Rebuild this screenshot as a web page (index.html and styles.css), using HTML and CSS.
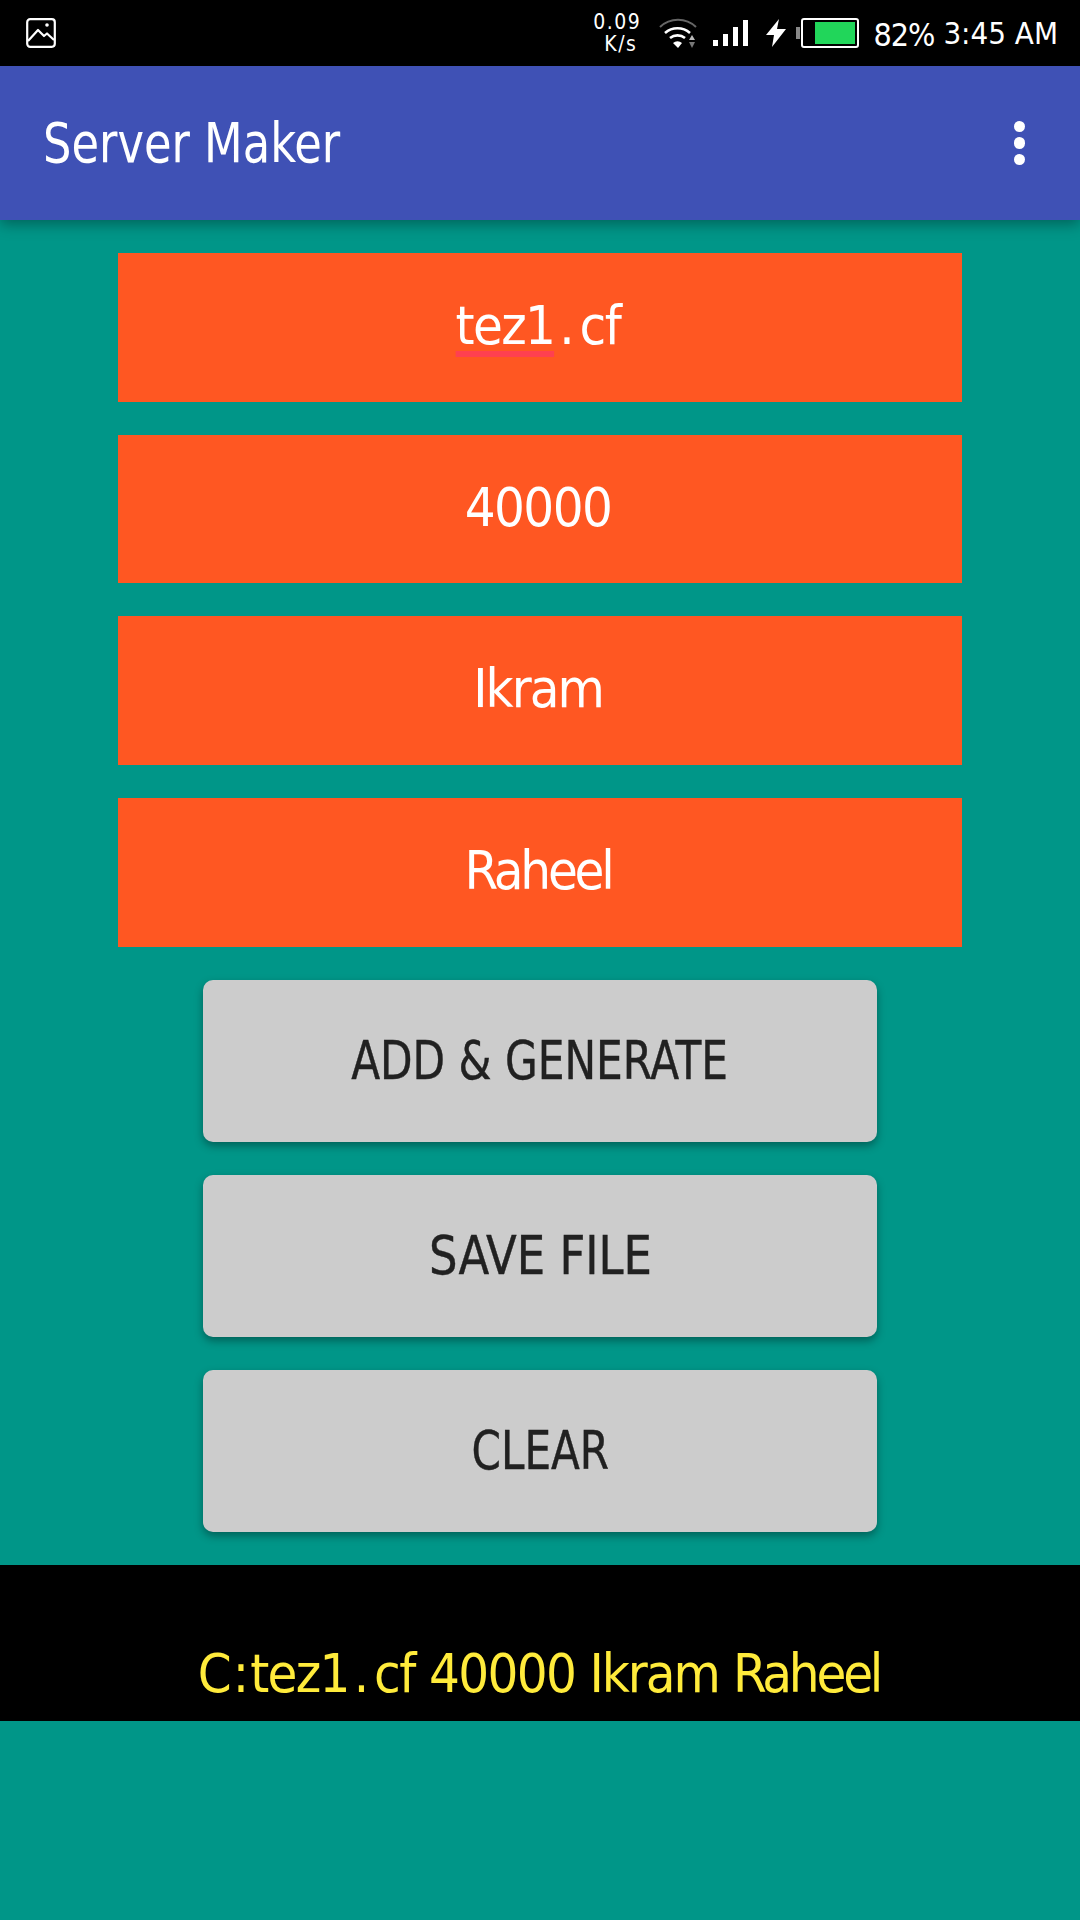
FILE: index.html
```html
<!DOCTYPE html>
<html lang="en">
<head>
<meta charset="utf-8">
<title>Server Maker</title>
<link rel="stylesheet" href="styles.css">
</head>
<body>
<div class="status">
  <svg class="ic-image" viewBox="0 0 30 30" width="30" height="30" fill="none" stroke="#fff" stroke-width="2.2" stroke-linejoin="round">
    <rect x="1.2" y="1.2" width="27.6" height="27.6" rx="3"/>
    <path d="M2 23 L12 12 L18 18 L21 15.5 L28 22"/>
    <circle cx="21" cy="7" r="1.8" fill="#fff" stroke="none"/>
  </svg>
  <div class="status-right">
    <div class="speed"><span>0.09</span><span>K/s</span></div>
    <svg class="ic-wifi" viewBox="0 0 38 30" width="38" height="30" fill="none" stroke-linecap="butt">
      <path d="M1 9 A26 26 0 0 1 37 9" stroke="#666" stroke-width="2"/>
      <path d="M6 15 A19 19 0 0 1 31 15" stroke="#fff" stroke-width="2.6"/>
      <path d="M11 20 A12 12 0 0 1 26 20" stroke="#fff" stroke-width="2.6"/>
      <path d="M14 25 L19 30 L23 25 A7 7 0 0 0 14 25 Z" fill="#fff"/>
      <path d="M30 22 L33 17 L36 22 Z" fill="#bbb"/>
      <path d="M30 24 L33 30 L36 24 Z" fill="#777"/>
    </svg>
    <div class="signal"><i class="s1"></i><i class="s2"></i><i class="s3"></i><i class="s4"></i></div>
    <svg class="ic-bolt" viewBox="0 0 20 28" width="20" height="28"><path d="M13 0 L0 16 L8 16 L6 28 L20 10 L11 10 Z" fill="#fff"/></svg>
    <div class="battery"><div class="nub"></div><div class="cell"><div class="charge"></div></div></div>
    <span class="pct">82%</span>
    <span class="time">3:45 AM</span>
  </div>
</div>
<header class="appbar">
  <h1 class="title">Server Maker</h1>
  <div class="more"><i></i><i></i><i></i></div>
</header>
<main class="content">
  <div class="field"><span class="w-tez">tez1</span><span class="w-dot">.</span><span class="w-cf">cf</span></div>
  <div class="field"><span class="w-num">40000</span></div>
  <div class="field"><span class="w-ikram">Ikram</span></div>
  <div class="field"><span class="w-raheel">Raheel</span></div>
  <button class="btn"><span class="label label-add">ADD &amp; GENERATE</span></button>
  <button class="btn"><span class="label label-save">SAVE FILE</span></button>
  <button class="btn"><span class="label label-clear">CLEAR</span></button>
</main>
<div class="output"><span class="w-c">C:</span><span class="w-plain">tez1</span><span class="w-dot">.</span><span class="w-cf">cf</span> <span class="w-num">40000</span> <span class="w-ikram">Ikram</span> <span class="w-raheel">Raheel</span></div>
</body>
</html>
```
FILE: styles.css
```css
* { box-sizing: border-box; }
html, body { margin: 0; padding: 0; }
body {
  width: 1080px;
  height: 1920px;
  overflow: hidden;
  background: #009688;
  font-family: "DejaVu Sans", sans-serif;
  font-stretch: condensed;
}
.status {
  height: 66px;
  background: #000;
  color: #fff;
  display: flex;
  align-items: center;
  justify-content: space-between;
  padding: 0 22px 0 26px;
}
.ic-image { display: block; }
.status-right { display: flex; align-items: center; }
.speed {
  display: flex;
  flex-direction: column;
  align-items: flex-end;
  width: 48px;
  font-size: 21px;
  line-height: 22px;
  letter-spacing: 1.5px;
  margin-right: 18px;
}
.speed span:last-child { margin-right: 4px; }
.ic-wifi { display: block; margin-right: 16px; }
.signal { display: flex; align-items: flex-end; gap: 5px; height: 26px; margin-right: 18px; }
.signal i { display: block; width: 5px; background: #fff; }
.signal .s1 { height: 6px; }
.signal .s2 { height: 12px; }
.signal .s3 { height: 19px; }
.signal .s4 { height: 26px; }
.ic-bolt { display: block; margin-right: 10px; }
.battery { display: flex; align-items: center; margin-right: 14px; }
.nub { width: 4px; height: 12px; background: #888; margin-right: 1px; }
.cell {
  width: 58px;
  height: 30px;
  border: 2px solid #fff;
  border-radius: 3px;
  padding: 2px;
  display: flex;
  justify-content: flex-end;
}
.charge { width: 40px; background: #21d65a; }
.pct { font-size: 32px; margin-right: 9px; letter-spacing: -1px; padding-top: 4px; }
.time { font-size: 31px; }
.appbar {
  height: 154px;
  background: #3f51b5;
  color: #fff;
  display: flex;
  align-items: center;
  justify-content: space-between;
  padding: 0 55px 0 43px;
  box-shadow: 0 4px 14px rgba(0, 0, 0, 0.35);
  position: relative;
}
.title { margin: 0; font-size: 55px; font-weight: 400; transform: scaleX(0.905); transform-origin: left center; }
.more { display: flex; flex-direction: column; gap: 5px; }
.more i { display: block; width: 11.5px; height: 11.5px; border-radius: 50%; background: #fff; }
.content {
  display: flex;
  flex-direction: column;
  align-items: center;
  padding: 33px 0;
}
.field {
  width: 844px;
  height: 148.7px;
  margin-bottom: 33px;
  padding: 0 4px 4px 0;
  background: #ff5722;
  color: #fff;
  font-size: 54px;
  display: flex;
  align-items: center;
  justify-content: center;
}
.w-tez, .w-plain { letter-spacing: -1.7px; }
.w-tez {
  text-decoration: underline;
  text-decoration-color: #ff4050;
  text-decoration-thickness: 6px;
  text-decoration-skip-ink: none;
  text-underline-offset: 7px;
}
.w-dot { padding: 0 5px 0 5px; }
.w-cf { letter-spacing: -1.5px; }
.w-c { letter-spacing: 1px; }
.w-num { letter-spacing: -1.6px; }
.w-ikram { letter-spacing: -2px; }
.w-raheel { letter-spacing: -3.2px; }
.btn {
  width: 674px;
  height: 162px;
  margin: 0 0 33px 0;
  border: 0;
  border-radius: 10px;
  background: #ccc;
  color: #212121;
  font-family: inherit;
  font-stretch: condensed;
  font-size: 54px;
  padding: 0;
  white-space: nowrap;
  overflow: visible;
  box-shadow: 0 4px 8px rgba(0, 0, 0, 0.35);
  -webkit-text-stroke: 0.4px #212121;
}
.btn:last-child { margin-bottom: 0; }
.label { display: inline-block; }
.label-add { transform: scaleX(0.87); }
.label-save { transform: scaleX(0.925); }
.label-clear { transform: scaleX(0.867); }
.output {
  height: 156px;
  background: #000;
  color: #ffeb3b;
  font-size: 54px;
  display: flex;
  align-items: flex-end;
  justify-content: center;
  gap: 14px;
  padding: 0 2px 16px 0;
}
.output .w-c { margin-right: -14px; }
.output .w-plain { margin-right: -14px; }
.output .w-dot { margin-right: -14px; }
```
